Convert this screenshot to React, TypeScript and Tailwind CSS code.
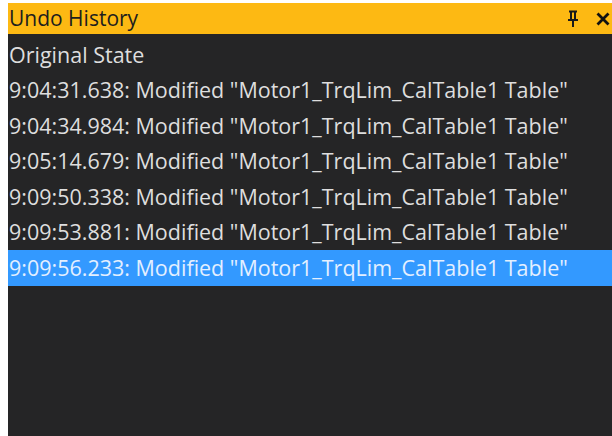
import React from "react";

const entries = [
  "Original State",
  '9:04:31.638: Modified "Motor1_TrqLim_CalTable1 Table"',
  '9:04:34.984: Modified "Motor1_TrqLim_CalTable1 Table"',
  '9:05:14.679: Modified "Motor1_TrqLim_CalTable1 Table"',
  '9:09:50.338: Modified "Motor1_TrqLim_CalTable1 Table"',
  '9:09:53.881: Modified "Motor1_TrqLim_CalTable1 Table"',
  '9:09:56.233: Modified "Motor1_TrqLim_CalTable1 Table"',
];

function PinIcon() {
  return (
    <svg width="12" height="18" viewBox="0 0 12 18" fill="none">
      <path d="M2 1.5h8M4 1.5v8M8 1.5v8M1 10h10M6 10v7" stroke="#1a1a1a" strokeWidth="2" />
    </svg>
  );
}

function CloseIcon() {
  return (
    <svg width="14" height="14" viewBox="0 0 14 14">
      <path d="M1.5 1.5l11 11M12.5 1.5l-11 11" stroke="#111" strokeWidth="2.8" />
    </svg>
  );
}

export default function App() {
  const selected = entries.length - 1;
  return (
    <div className="w-[612px] h-[436px] bg-white pt-[3px] pl-[8px] overflow-hidden" style={{ fontFamily: '"Open Sans", "Noto Sans", sans-serif' }}>
      <div className="flex flex-col h-full bg-[#252526]">
        <div className="h-[31px] shrink-0 bg-[#fdb913] flex items-center pl-[1px] pr-[2px]">
          <span className="text-[21px] text-[#1e1e1e] leading-none flex-1">Undo History</span>
          <div className="flex items-center gap-[17px]">
            <PinIcon />
            <CloseIcon />
          </div>
        </div>
        <div className="flex flex-col pt-[3px]">
          {entries.map((e, i) => (
            <div
              key={i}
              className={
                "h-[35.5px] flex items-center pl-[1px] text-[21.5px] whitespace-nowrap " +
                (i === selected ? "bg-[#3399ff] text-[#e3efff]" : "text-[#dedede]")
              }
            >
              {e}
            </div>
          ))}
        </div>
      </div>
    </div>
  );
}
